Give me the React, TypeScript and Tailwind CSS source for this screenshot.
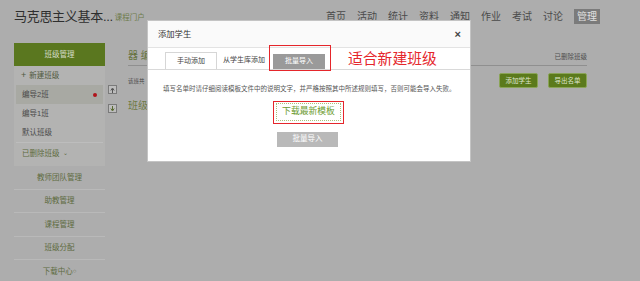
import React from 'react';

const navItems = ['首页', '活动', '统计', '资料', '通知', '作业', '考试', '讨论'];
const classItems = ['编导2班', '编导1班', '默认班级'];
const lowerMenu = ['教师团队管理', '助教管理', '课程管理', '班级分配', '下载中心'];

const Sidebar = () => (
  <div className="w-[91px] shrink-0 flex flex-col">
    <div className="h-[23px] bg-[#5a771f] flex items-center justify-center text-[7.5px] text-[#d6dcc8]">
      班级管理
    </div>
    <div className="bg-[#b3b3b2] flex flex-col pb-[2px]">
      <div className="h-[19px] flex items-center pl-[7px] text-[7.5px] text-[#505a40]">
        <span className="mr-[3px] text-[9px] leading-none">+</span>新建班级
      </div>
      {classItems.map((name, i) => (
        <div
          key={name}
          className={
            'h-[19px] mx-[2px] flex items-center justify-between pl-[6px] pr-[6px] text-[7.5px] text-[#4a4a4a] ' +
            (i === 0 ? 'bg-[#a8a9a3]' : '')
          }
        >
          {name}
          {i === 0 && <span className="w-[4px] h-[4px] rounded-full bg-[#b0141b]" />}
        </div>
      ))}
      <div className="mx-[2px] border-t border-[#bdbdbd] h-[22px] flex items-center pl-[6px] text-[7.5px] text-[#5d6b40]">
        已删除班级<span className="ml-[3px] text-[6px]">⌄</span>
      </div>
    </div>
    {lowerMenu.map((name, i) => (
      <div
        key={name}
        className={
          'h-[23.5px] flex items-center justify-center text-[7.5px] text-[#5d6b40] ' +
          (i < lowerMenu.length - 1 ? 'border-b border-[#b9b9b9]' : '')
        }
      >
        {name}
        {i === lowerMenu.length - 1 && <span className="text-[6px]">○</span>}
      </div>
    ))}
  </div>
);

const ArrowBox = ({ down }: { down?: boolean }) => (
  <div className="w-[9px] h-[9px] border border-[#7a7a7a] bg-[#bdbdbd] flex items-center justify-center">
    <svg width="5" height="6" viewBox="0 0 5 6">
      {down ? (
        <path d="M2.5 0v4M0.8 2.5L2.5 5L4.2 2.5" stroke="#5a6b32" strokeWidth="1" fill="none" />
      ) : (
        <path d="M2.5 6V2M0.8 3.5L2.5 1L4.2 3.5" stroke="#555" strokeWidth="1" fill="none" />
      )}
    </svg>
  </div>
);

const MainArea = () => (
  <div className="flex-1 flex pl-[3px] pr-[53px]">
    <div className="flex flex-col gap-[10px] pt-[42px] w-[12px] shrink-0">
      <ArrowBox />
      <ArrowBox down />
    </div>
    <div className="flex-1 flex flex-col ml-[8px]">
      <div className="h-[23px] flex items-end justify-between border-b border-[#8f8f8f] pb-[4px]">
        <div className="text-[10px] text-[#66733f] leading-none">器 编</div>
        <div className="text-[6.5px] text-[#4f4f4f] leading-none mb-[1px]">已删除班级</div>
      </div>
      <div className="flex justify-between pt-[7px]">
        <div className="text-[5.5px] text-[#444] pt-[4px]">该班共</div>
        <div className="flex gap-[10px]">
          <button className="w-[39px] h-[15px] rounded-[2px] bg-[#5b7a1c] border border-[#8aa456] text-[6.5px] text-[#dfe6cd]">
            添加学生
          </button>
          <button className="w-[39px] h-[15px] rounded-[2px] bg-[#5b7a1c] border border-[#8aa456] text-[6.5px] text-[#dfe6cd]">
            导出名单
          </button>
        </div>
      </div>
      <div className="text-[10px] text-[#6d7a45] mt-[10px]">班级</div>
    </div>
  </div>
);

const Modal = () => (
  <div className="absolute left-[147px] top-[20px] w-[324px] h-[142px] bg-white border border-[#c4c4c4] flex flex-col">
    <div className="h-[27px] flex items-center justify-between pl-[10px] pr-[9px] border-b border-[#e3e3e3] bg-[#fafafa]">
      <span className="text-[8.3px] text-[#333]">添加学生</span>
      <span className="text-[11px] leading-none text-[#444] font-bold">×</span>
    </div>
    <div className="flex items-end pl-[17px] pr-[2px] border-b border-[#d9d9d9] h-[22px]">
      <div className="w-[52px] h-[17px] border border-[#d6d6d6] border-b-0 flex items-center justify-center text-[7px] text-[#444]">
        手动添加
      </div>
      <div className="w-[54px] h-[17px] flex items-center justify-center text-[7px] text-[#444]">
        从学生库添加
      </div>
      <div className="relative">
        <div className="w-[52px] h-[15px] bg-[#9a9a9a] flex items-center justify-center text-[7px] text-white ml-[2px]">
          批量导入
        </div>
        <div className="absolute left-[-2px] top-[-9px] w-[62px] h-[26px] border-[1.5px] border-[#e5262b]" />
      </div>
      <div className="self-center ml-[23px] mt-[2px] text-[14.8px] leading-none text-[#e5262b]">
        适合新建班级
      </div>
    </div>
    <div className="pl-[15px] pt-[16px] text-[6.5px] leading-none text-[#555] whitespace-nowrap">
      填写名单时请仔细阅读模板文件中的说明文字，并严格按照其中所述规则填写，否则可能会导入失败。
    </div>
    <div className="flex justify-center mt-[8px] ml-[-1px]">
      <div className="w-[71px] h-[23px] border-[1.5px] border-[#e5262b] flex items-center justify-center">
        <div className="w-[65px] h-[18px] border border-dotted border-[#a7c27a] flex items-center justify-center text-[8.8px] text-[#6b9a2f]">
          下载最新模板
        </div>
      </div>
    </div>
    <div className="flex justify-center mt-[8px] ml-[-3px]">
      <div className="w-[61px] h-[15px] bg-[#b9b9b9] flex items-center justify-center text-[7.5px] text-white">
        批量导入
      </div>
    </div>
  </div>
);

export default function App() {
  return (
    <div className="relative w-[640px] h-[281px] overflow-hidden bg-[#adadad] font-['Liberation_Sans','Noto_Sans_CJK_SC',sans-serif]">
      <div className="h-[32px] flex items-center justify-between pl-[14px] pr-[40px]">
        <div className="flex items-end">
          <span className="text-[13px] leading-none text-[#2e2e2e] tracking-[-0.3px]">马克思主义基本...</span>
          <span className="text-[7.5px] leading-none text-[#6c7a4a] ml-[2px] mb-[1px]">课程门户</span>
        </div>
        <div className="flex items-center gap-[11px] text-[10px] text-[#4a4a4a]">
          {navItems.map((n) => (
            <span key={n}>{n}</span>
          ))}
          <span className="bg-[#7b7b7b] text-[#e0e0e0] px-[3px] h-[15px] flex items-center">管理</span>
        </div>
      </div>
      <div className="flex pt-[11px] pl-[14px]">
        <Sidebar />
        <MainArea />
      </div>
      <Modal />
    </div>
  );
}
